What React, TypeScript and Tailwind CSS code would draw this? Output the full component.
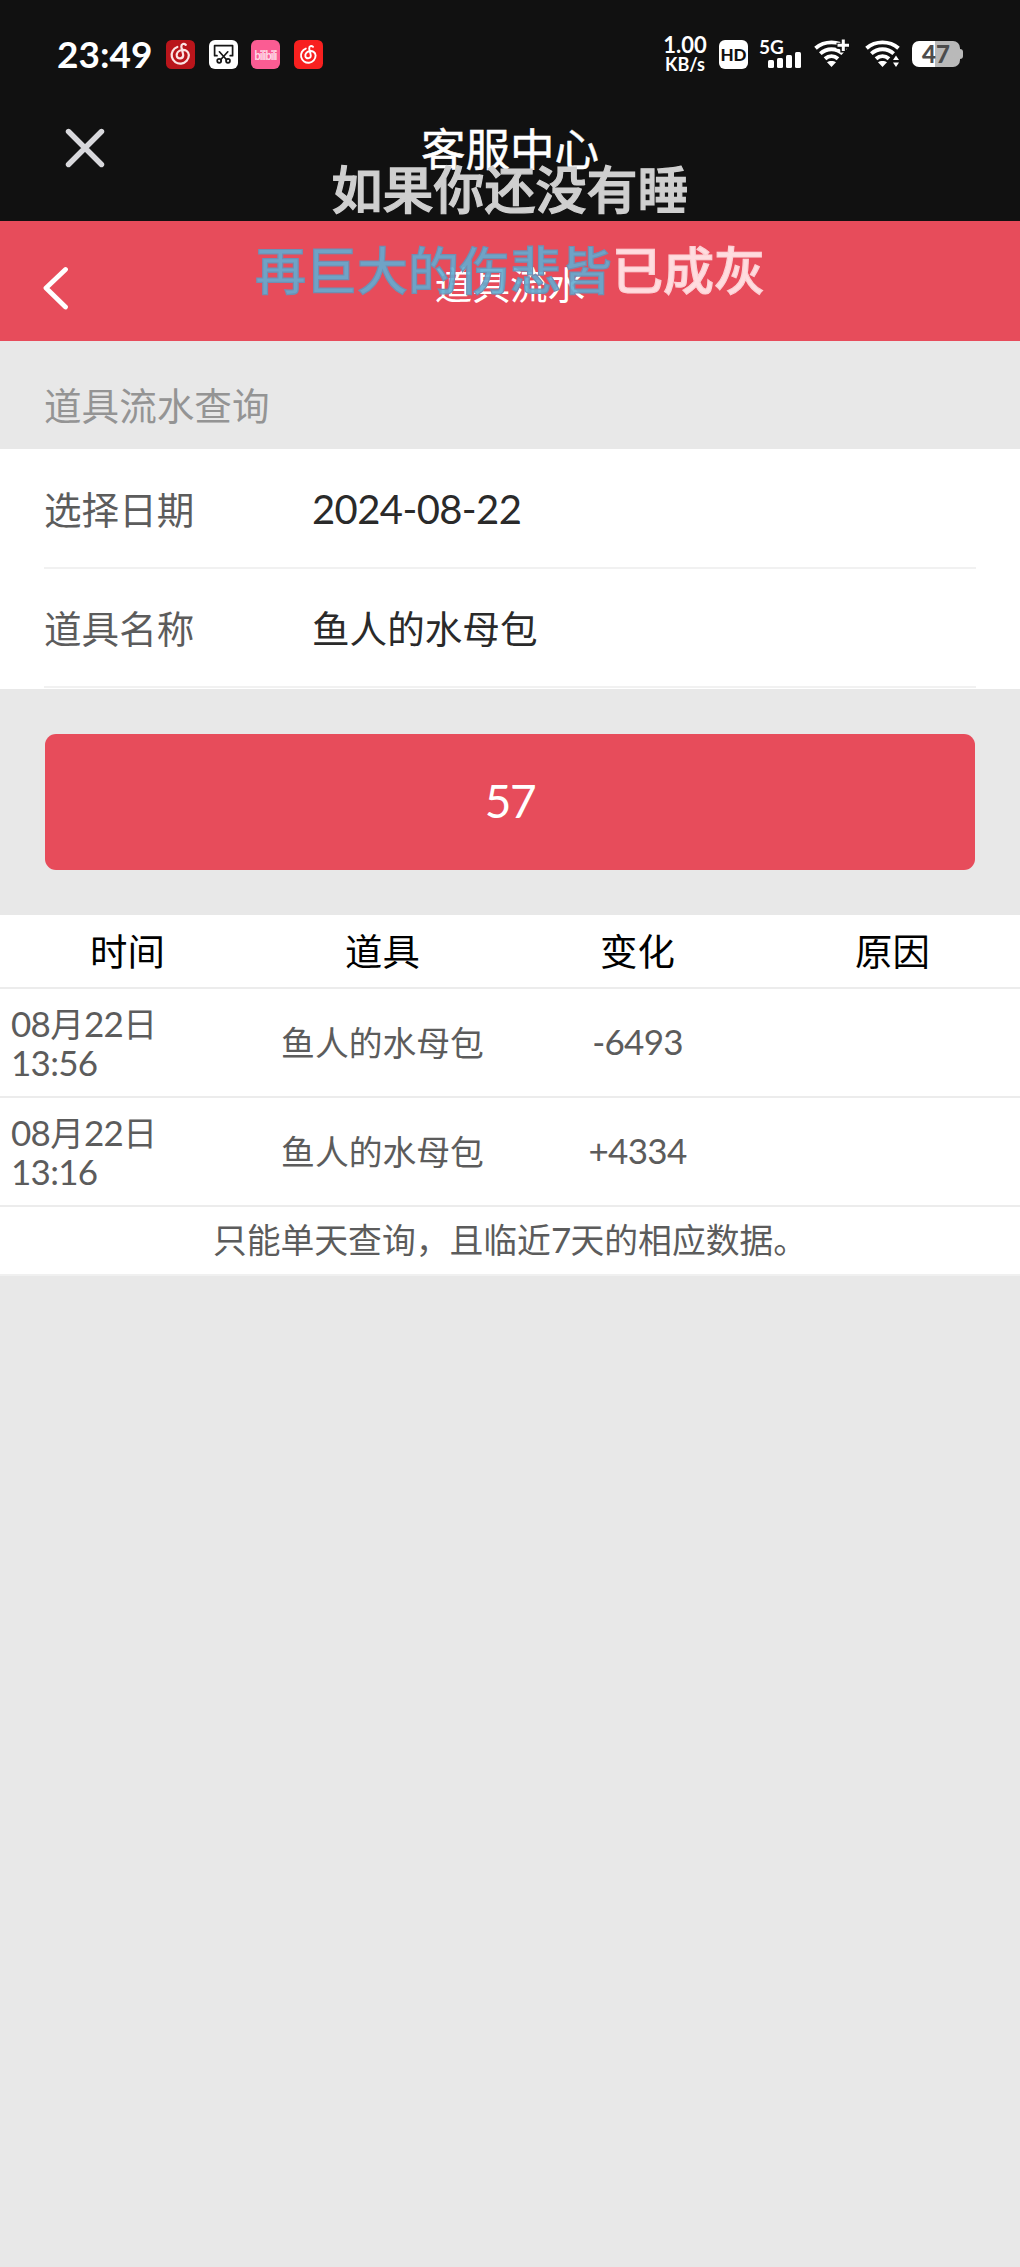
import { ReactNode } from "react";

// ============================================================================
// DATA
// ============================================================================

interface FlowRecord {
  date: string[];
  time: string;
  item: string;
  change: string;
}

const columns = ["时间", "道具", "变化", "原因"];

const records: FlowRecord[] = [
  { date: ["08", "月", "22", "日"], time: "13:56", item: "鱼人的水母包", change: "-6493" },
  { date: ["08", "月", "22", "日"], time: "13:16", item: "鱼人的水母包", change: "+4334" },
];

// ============================================================================
// ICONS
// ============================================================================

function MusicIcon({ dark = false }: { dark?: boolean }) {
  return (
    <svg width="29" height="29" viewBox="0 0 29 29" fill="none">
      <rect width="29" height="29" rx="5.5" fill={dark ? "#b9151b" : "#f8201f"} />
      <g
        transform={dark ? "translate(14.5 14.5) scale(1.18) translate(-14.5 -15)" : undefined}
        stroke={dark ? "#fbe3e3" : "#ffffff"}
        strokeWidth="1.9"
        strokeLinecap="round"
      >
        <path d="M11.8 8.6A7.3 7.3 0 1 0 21.6 15.5C21.4 12.2 18.6 10.6 15.4 11.2C12.6 11.8 11 14 11.4 16.2C12 19 16.6 19 16.8 15.8C16.8 14 15.2 10 15.2 8.2C15.2 6 17.4 5.4 19 6.8" />
      </g>
    </svg>
  );
}

function ScissorsIcon() {
  return (
    <svg width="29" height="29" viewBox="0 0 29 29" fill="none">
      <rect width="29" height="29" rx="6" fill="#ffffff" />
      <g stroke="#151515" strokeWidth="1.7" strokeLinecap="round" strokeLinejoin="round">
        <path d="M8 15.7H5.6V5.6H23.6V15.7H21.2" />
        <path d="M10.4 11.8L17.6 19.8M18.8 11.8L11.6 19.8" />
        <circle cx="10.2" cy="20.8" r="2" />
        <circle cx="19" cy="20.8" r="2" />
      </g>
    </svg>
  );
}

function BilibiliIcon() {
  return (
    <div className="flex h-[29px] w-[29px] items-center justify-center rounded-md bg-[#fb5c93] font-['Lato'] text-[11px] leading-none font-bold tracking-[-0.9px] text-[#ffdbe8]">
      <span className="scale-y-125">bilibili</span>
    </div>
  );
}

function SignalIcon() {
  return (
    <svg width="33" height="16" viewBox="0 0 33 16" fill="#ffffff">
      <rect x="0" y="8" width="6" height="8" rx="1.5" />
      <rect x="9" y="6" width="6" height="10" rx="1.5" />
      <rect x="18" y="3" width="6" height="13" rx="1.5" />
      <rect x="27" y="0" width="6" height="16" rx="1.5" />
    </svg>
  );
}

function WifiIcon({ children }: { children?: ReactNode }) {
  return (
    <svg width="37" height="30" viewBox="0 0 37 30" fill="none">
      <g stroke="#ffffff" strokeWidth="3.9">
        <path d="M1.5 9.2C10.5 1.4 24.5 1.4 33.5 9.2" />
        <path d="M6.3 14.6C12.8 8.8 22.2 8.8 28.7 14.6" />
        <path d="M11 19.8C15 16.2 20 16.2 24 19.8" />
      </g>
      <path d="M13 23.3C15.2 21.4 19.8 21.4 22 23.3L17.5 28Z" fill="#ffffff" />
      {children}
    </svg>
  );
}

function Battery() {
  return (
    <div className="flex items-center">
      <div className="flex h-[26px] w-12 items-center justify-center rounded-[7px] bg-linear-to-r from-white from-48% to-[#b9b9b9] to-48% font-['Lato'] text-[24px] leading-none font-black text-[#4c4c4c]">
        47
      </div>
      <div className="h-2.5 w-[3px] rounded-r-sm bg-[#b9b9b9]" />
    </div>
  );
}

// ============================================================================
// SECTIONS
// ============================================================================

function Num({ children }: { children: ReactNode }) {
  return <span className="font-['Lato'] text-[35px] tracking-[-0.7px]">{children}</span>;
}

function StatusBar() {
  return (
    <div className="flex h-[108px] items-center justify-between pr-[57px] pl-[57px]">
      <div className="flex items-center">
        <span className="w-[109px] pb-0.5 font-['Lato'] text-[37px] leading-none font-bold">23:49</span>
        <div className="flex gap-[13.5px]">
          <MusicIcon dark />
          <ScissorsIcon />
          <BilibiliIcon />
          <MusicIcon />
        </div>
      </div>

      <div className="flex items-center">
        <div className="w-[46px] text-center font-['Lato'] font-bold">
          <div className="text-[22px] leading-[18px]">1.00</div>
          <div className="pt-0.5 text-[18px] leading-[16px]">KB/s</div>
        </div>
        <div className="ml-[11px] flex h-[29px] w-[29px] items-center justify-center rounded-md bg-white font-['Lato'] text-[17px] leading-none font-black text-[#111111]">
          HD
        </div>
        <div className="ml-[11px] flex h-[29px] w-[43px] flex-col">
          <span className="h-3 font-['Lato'] text-[19px] leading-[13px] font-bold">5G</span>
          <div className="ml-[9px]">
            <SignalIcon />
          </div>
        </div>
        <div className="ml-3">
          <WifiIcon>
            <path d="M22.5 6.8H37M29.3 0V13.5" stroke="#111111" strokeWidth="6" />
            <path d="M23.5 6.2H35M29.3 0.5V12" stroke="#ffffff" strokeWidth="3" />
          </WifiIcon>
        </div>
        <div className="ml-[14px]">
          <WifiIcon>
            <path d="M26 21.5L31 14L36 21.5V24L31 31L26 24Z" fill="#111111" />
            <path d="M28 21L31 16.5L34 21ZM28 23.5L31 28L34 23.5Z" fill="#ffffff" />
          </WifiIcon>
        </div>
        <div className="ml-2.5">
          <Battery />
        </div>
      </div>
    </div>
  );
}

// Desktop lyrics of the music player, floating over every app
function FloatingLyrics() {
  return (
    <div className="pointer-events-none absolute inset-x-0 top-[147px] text-center text-[51px] leading-[81px] font-medium whitespace-nowrap">
      <p className="text-[#cfcfcf] [-webkit-text-stroke:1.2px_#cfcfcf]">如果你还没有睡</p>
      <p>
        <span className="text-[#62add2]/90 [-webkit-text-stroke:1.2px_#6f8fb3]">再巨大的伤悲皆</span>
        <span className="text-[#ffdcdf] [-webkit-text-stroke:1.2px_#fcd0d4]">已成灰</span>
      </p>
    </div>
  );
}

function FormRow({ label, children }: { label: string; children: ReactNode }) {
  return (
    <div className="mx-11 flex h-[119.5px] items-center border-b-2 border-[#f1f1f1]">
      <span className="w-[268px] text-[#5c5c5c]">{label}</span>
      <span className="text-[#2a2a2a]">{children}</span>
    </div>
  );
}

// ============================================================================
// PAGE
// ============================================================================

export default function App() {
  return (
    <div className="relative h-[2267px] w-[1020px] overflow-hidden bg-[#e8e8e8] font-['Noto_Sans_CJK_SC',sans-serif] text-[37.6px] leading-none">
      <header className="h-[221px] bg-[#111111] text-white">
        <StatusBar />
        <div className="flex h-[79px] items-center justify-between px-[65px]">
          <svg width="40" height="40" viewBox="0 0 40 40" stroke="#d8d8dc" strokeWidth="5.4" strokeLinecap="round">
            <path d="M3.5 3.5L36.5 36.5M36.5 3.5L3.5 36.5" />
          </svg>
          <h1 className="text-[44.5px] leading-none [-webkit-text-stroke:0.5px_#ffffff]">客服中心</h1>
          <div className="w-10" />
        </div>
      </header>

      <nav className="flex h-[120px] items-center justify-between bg-[#e74c5b] px-[42px] text-white">
        <svg width="28" height="44" viewBox="0 0 28 44" fill="none" stroke="#ffffff" strokeWidth="4.8" strokeLinecap="round" strokeLinejoin="round" className="mt-3.5">
          <path d="M23.5 3.5L4 22L23.5 41" />
        </svg>
        <h2 className="mt-1">道具流水</h2>
        <div className="w-7" />
      </nav>

      <FloatingLyrics />

      <div className="flex h-[108px] items-center pt-[18px] pl-11 text-[#949494]">道具流水查询</div>

      <section className="h-60 bg-white">
        <FormRow label="选择日期">
          <span className="inline-block pt-0.5 font-['Lato'] text-[40px] tracking-[-0.6px]">2024-08-22</span>
        </FormRow>
        <FormRow label="道具名称">鱼人的水母包</FormRow>
      </section>

      <button className="mx-[45px] mt-[45px] flex h-[136px] w-[930px] items-center justify-center rounded-[11px] bg-[#e74c5b] pb-0.5 font-['Lato'] text-[46px] tracking-[-1.5px] text-white">
        57
      </button>

      <section className="mt-[45px] bg-white text-[33.8px] text-[#5c5c5c]">
        <div className="grid h-[74px] grid-cols-4 items-center border-b-2 border-[#ececec] text-center text-[37.4px] text-black">
          {columns.map((name) => (
            <span key={name}>{name}</span>
          ))}
        </div>

        {records.map((record) => (
          <div key={record.time} className="grid h-[109px] grid-cols-4 items-center border-b-2 border-[#ececec] pb-0.5 text-center">
            <div className="pl-[11px] text-left">
              <div className="h-10 leading-10">
                <Num>{record.date[0]}</Num>
                {record.date[1]}
                <Num>{record.date[2]}</Num>
                {record.date[3]}
              </div>
              <div className="h-[38px] leading-[38px]">
                <Num>{record.time}</Num>
              </div>
            </div>
            <span>{record.item}</span>
            <Num>{record.change}</Num>
          </div>
        ))}

        <p className="flex h-[69px] items-center justify-center border-b-2 border-[#f0f0f0] pb-[3px]">
          只能单天查询，且临近<Num>7</Num>天的相应数据。
        </p>
      </section>
    </div>
  );
}
